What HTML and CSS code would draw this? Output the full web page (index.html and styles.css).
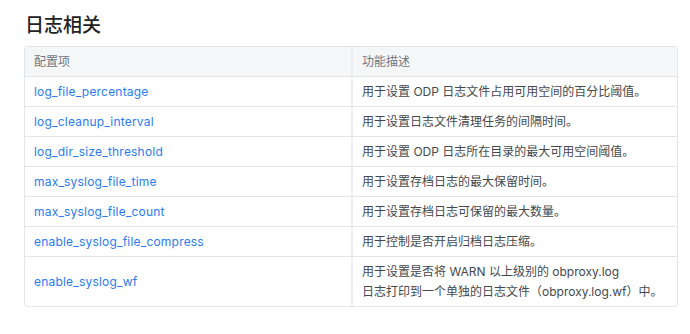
FILE: index.html
```html
<!DOCTYPE html>
<html lang="zh">
<head>
<meta charset="utf-8">
<link rel="stylesheet" href="styles.css">
</head>
<body>
<div class="page">
  <h2 class="title">日志相关</h2>
  <table class="cfg">
    <thead>
      <tr><th class="c1">配置项</th><th>功能描述</th></tr>
    </thead>
    <tbody>
      <tr><td class="c1"><a>log_file_percentage</a></td><td>用于设置 ODP 日志文件占用可用空间的百分比阈值。</td></tr>
      <tr><td class="c1"><a>log_cleanup_interval</a></td><td>用于设置日志文件清理任务的间隔时间。</td></tr>
      <tr><td class="c1"><a>log_dir_size_threshold</a></td><td>用于设置 ODP 日志所在目录的最大可用空间阈值。</td></tr>
      <tr><td class="c1"><a>max_syslog_file_time</a></td><td>用于设置存档日志的最大保留时间。</td></tr>
      <tr><td class="c1"><a>max_syslog_file_count</a></td><td>用于设置存档日志可保留的最大数量。</td></tr>
      <tr><td class="c1"><a>enable_syslog_file_compress</a></td><td>用于控制是否开启归档日志压缩。</td></tr>
      <tr><td class="c1"><a>enable_syslog_wf</a></td><td>用于设置是否将 WARN 以上级别的 obproxy.log<br>日志打印到一个单独的日志文件（obproxy.log.wf）中。</td></tr>
    </tbody>
  </table>
</div>
</body>
</html>
```
FILE: styles.css
```css
html, body {
  margin: 0;
  padding: 0;
  background: #ffffff;
}
body {
  font-family: Inter, "Noto Sans CJK SC", sans-serif;
  color: #333;
}
.page {
  padding: 11px 12px 0 24px;
}
.title {
  margin: 0 0 10px 1px;
  font-family: "Noto Sans CJK SC", sans-serif;
  font-size: 19px;
  font-weight: 500;
  line-height: 25px;
  color: #222;
}
.cfg {
  width: 654px;
  table-layout: fixed;
  border-collapse: separate;
  border-spacing: 0;
  border: 1px solid #e3e5e9;
  border-radius: 3px;
  font-size: 12px;
  font-family: Inter, "Noto Sans CJK SC", sans-serif;
}
.cfg th, .cfg td {
  text-align: left;
  padding: 5px 9px 4px;
  line-height: 20px;
  border-bottom: 1px solid #e3e5e9;
  vertical-align: middle;
  white-space: nowrap;
}
.cfg tbody tr:last-child td {
  border-bottom: none;
}
.cfg th {
  background: #f5f6f8;
  font-weight: 400;
  color: #73777e;
}
.cfg .c1 {
  width: 308px;
  border-right: 2px solid #eceef1;
}
.cfg td:not(.c1), .cfg th:not(.c1) {
  padding-left: 9px;
}
.cfg td:not(.c1) {
  color: #45484d;
}
.cfg a {
  color: #2a7cf0;
  text-decoration: none;
  letter-spacing: 0.2px;
}
```
